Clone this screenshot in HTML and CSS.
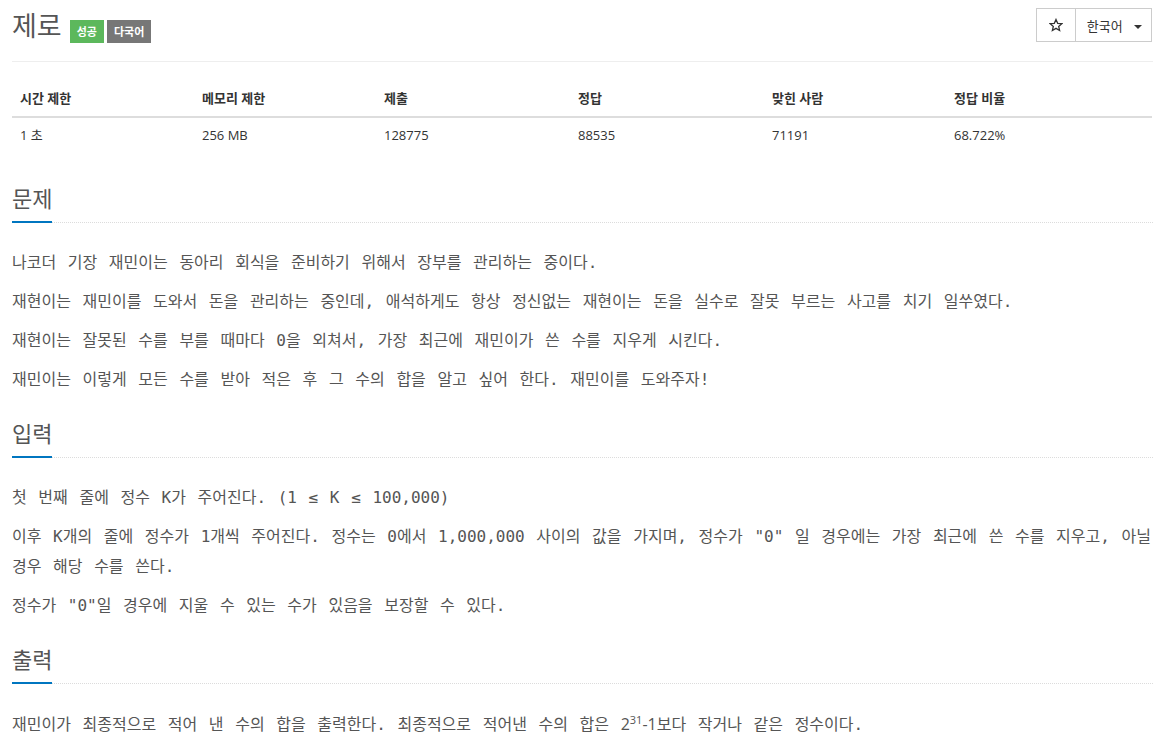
FILE: index.html
```html
<!DOCTYPE html>
<html lang="ko">
<head>
    <meta charset="UTF-8">
    <title>제로</title>
    <link rel="stylesheet" href="styles.css">
</head>
<body>
    <div class="container">
        <div class="page-header">
            <h1 class="title">제로 <span class="label label-success">성공</span><span class="label label-default">다국어</span></h1>
            <div class="btn-group">
                <button class="btn btn-star">
                    <svg width="14" height="14" viewBox="0 0 24 24"><path d="M12 2.5l2.9 6.6 7.1.6-5.4 4.7 1.6 7-6.2-3.7-6.2 3.7 1.6-7L2 9.7l7.1-.6z" fill="none" stroke="#333" stroke-width="2.2" stroke-linejoin="miter"/></svg>
                </button>
                <button class="btn btn-lang">한국어 <span class="caret"></span></button>
            </div>
        </div>

        <table class="problem-info">
            <thead>
                <tr>
                    <th class="col-a">시간 제한</th>
                    <th class="col-a">메모리 제한</th>
                    <th class="col-b">제출</th>
                    <th class="col-b">정답</th>
                    <th class="col-a">맞힌 사람</th>
                    <th>정답 비율</th>
                </tr>
            </thead>
            <tbody>
                <tr>
                    <td>1 초</td>
                    <td>256 MB</td>
                    <td>128775</td>
                    <td>88535</td>
                    <td>71191</td>
                    <td>68.722%</td>
                </tr>
            </tbody>
        </table>

        <section class="problem-section">
            <div class="headline"><h2>문제</h2></div>
            <div class="problem-text">
                <p>나코더 기장 재민이는 동아리 회식을 준비하기 위해서 장부를 관리하는 중이다.</p>
                <p>재현이는 재민이를 도와서 돈을 관리하는 중인데, 애석하게도 항상 정신없는 재현이는 돈을 실수로 잘못 부르는 사고를 치기 일쑤였다.</p>
                <p>재현이는 잘못된 수를 부를 때마다 0을 외쳐서, 가장 최근에 재민이가 쓴 수를 지우게 시킨다.</p>
                <p>재민이는 이렇게 모든 수를 받아 적은 후 그 수의 합을 알고 싶어 한다. 재민이를 도와주자!</p>
            </div>
        </section>

        <section class="problem-section">
            <div class="headline"><h2>입력</h2></div>
            <div class="problem-text">
                <p>첫 번째 줄에 정수 K가 주어진다. (1 ≤ K ≤ 100,000)</p>
                <p>이후 K개의 줄에 정수가 1개씩 주어진다. 정수는 0에서 1,000,000 사이의 값을 가지며, 정수가 "0" 일 경우에는 가장 최근에 쓴 수를 지우고, 아닐 경우 해당 수를 쓴다.</p>
                <p>정수가 "0"일 경우에 지울 수 있는 수가 있음을 보장할 수 있다.</p>
            </div>
        </section>

        <section class="problem-section">
            <div class="headline"><h2>출력</h2></div>
            <div class="problem-text">
                <p>재민이가 최종적으로 적어 낸 수의 합을 출력한다. 최종적으로 적어낸 수의 합은 <span class="math">2<sup>31</sup>-1</span>보다 작거나 같은 정수이다.</p>
            </div>
        </section>
    </div>
</body>
</html>
```

FILE: styles.css
```css
body {
    margin: 0;
    font-family: "Open Sans", "Noto Sans CJK KR", sans-serif;
    font-size: 13px;
    color: #333;
    background: #fff;
}
.container {
    padding: 0 10px 0 12px;
}
.page-header {
    display: flex;
    justify-content: space-between;
    align-items: flex-start;
    padding-top: 8px;
    height: 53px;
    border-bottom: 1px solid #eee;
}
.title {
    margin: 0;
    display: flex;
    align-items: flex-start;
    font-family: "Noto Sans CJK KR", sans-serif;
    font-size: 27px;
    font-weight: 400;
    color: #555;
    line-height: 34px;
}
.label {
    display: inline-block;
    font-family: "Noto Sans CJK KR", sans-serif;
    font-size: 11px;
    font-weight: 700;
    line-height: 23px;
    height: 23px;
    padding: 0 7px;
    color: #fff;
    margin-top: 12px;
}
.label-success {
    background: #5cb85c;
    margin-left: 8px;
}
.label-default {
    background: #777;
    margin-left: 3px;
}
.btn-group {
    display: flex;
    margin-right: 1px;
}
.btn {
    height: 34px;
    border: 1px solid #ccc;
    background: #fff;
    color: #333;
    font-family: "Noto Sans CJK KR", sans-serif;
    font-size: 13px;
    padding: 0;
    margin: 0;
}
.btn-star {
    width: 40px;
    display: flex;
    align-items: center;
    justify-content: center;
}
.btn-lang {
    width: 76px;
    border-left: none;
    padding-left: 2px;
}
.caret {
    display: inline-block;
    width: 0;
    height: 0;
    margin-left: 8px;
    vertical-align: middle;
    border-top: 4px solid #333;
    border-left: 4px solid transparent;
    border-right: 4px solid transparent;
}
.problem-info {
    width: 1140px;
    border-collapse: collapse;
    margin-top: 19px;
}
.problem-info th,
.problem-info td {
    text-align: left;
    padding: 8px 8px;
    line-height: 19px;
    font-weight: 400;
}
.problem-info th {
    font-weight: 700;
    border-bottom: 2px solid #ddd;
}
.col-a {
    width: 166px;
}
.col-b {
    width: 178px;
}
.problem-section {
    margin-top: 28px;
}
.problem-section + .problem-section {
    margin-top: 21px;
}
.headline {
    border-bottom: 1px dotted #dcdcdc;
    margin-bottom: 25px;
}
.headline h2 {
    display: inline-block;
    margin: 0 0 -1px;
    padding: 0 0 7px;
    font-family: "Noto Sans CJK KR", sans-serif;
    font-size: 22px;
    font-weight: 400;
    line-height: 33px;
    color: #555;
    border-bottom: 2px solid #0076c0;
}
.problem-text p {
    margin: 0 0 9px;
    font-family: "DejaVu Sans Mono", "Noto Sans CJK KR", monospace;
    font-size: 16px;
    line-height: 30px;
    word-spacing: 2px;
    word-break: keep-all;
    color: #555;
}
.math {
    font-family: "Open Sans", sans-serif;
    word-spacing: 0;
}
.math sup {
    font-size: 11px;
    line-height: 0;
}
```
